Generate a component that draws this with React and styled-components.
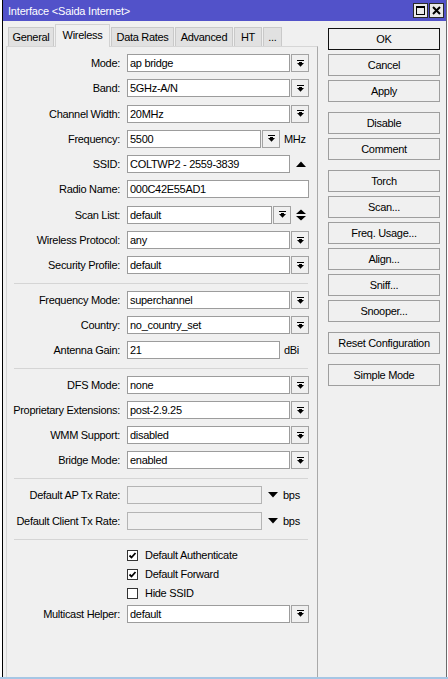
import React from "react";
import styled, { createGlobalStyle } from "styled-components";

const GlobalStyle = createGlobalStyle`
  html, body {
    margin: 0;
    padding: 0;
    background: #ffffff;
  }
  body {
    font-family: "Liberation Sans", Arial, sans-serif;
    font-size: 11px;
    letter-spacing: -0.3px;
    color: #000;
  }
`;

const Page = styled.div`
  width: 448px;
  height: 679px;
  padding-left: 2px;
  box-sizing: border-box;
  display: flex;
  flex-direction: column;
  overflow: hidden;
`;

const Window = styled.div`
  width: 445px;
  height: 677px;
  flex: none;
  box-sizing: border-box;
  border-left: 1px solid #000;
  border-right: 1px solid #6b6b6b;
  background: #f0f0f0;
  display: flex;
  flex-direction: column;
`;

const TaskStrip = styled.div`
  height: 2px;
  margin-left: -2px;
  width: 448px;
  background: #a6c6e4;
`;

const TitleBar = styled.div`
  height: 21px;
  flex: none;
  background: #5252c9;
  color: #fff;
  display: flex;
  align-items: center;
  justify-content: space-between;
  padding: 0 2px 0 5px;
  letter-spacing: -0.2px;
`;

const WinButtons = styled.div`
  display: flex;
  gap: 1px;
`;

const WinBtn = styled.div`
  width: 15px;
  height: 15px;
  box-sizing: border-box;
  border: 1px solid #2a2a2a;
  background: #e9e9e9;
  display: flex;
  align-items: center;
  justify-content: center;
`;

const Body = styled.div`
  flex: 1;
  display: flex;
  min-height: 0;
`;

const LeftCol = styled.div`
  margin-left: 3px;
  width: 312px;
  display: flex;
  flex-direction: column;
`;

const TabStrip = styled.div`
  height: 26px;
  flex: none;
  display: flex;
  align-items: flex-end;
  gap: 1px;
  padding-left: 2px;
  margin-bottom: -1px;
`;

const Tab = styled.div`
  width: ${(p) => p.w}px;
  height: ${(p) => (p.active ? 23 : 19)}px;
  margin-bottom: ${(p) => (p.active ? 0 : 1)}px;
  box-sizing: border-box;
  border: 1px solid ${(p) => (p.active ? "#d2d2d2" : "#c9c9c9")};
  border-bottom: none;
  background: ${(p) => (p.active ? "#f0f0f0" : "#e1e1e1")};
  display: flex;
  align-items: center;
  justify-content: center;
  padding-bottom: ${(p) => (p.active ? 2 : 0)}px;
  position: relative;
  z-index: ${(p) => (p.active ? 2 : 1)};
  white-space: nowrap;
`;

const Panel = styled.div`
  flex: 1;
  border: 1px solid #d6d6d6;
  border-right-color: #a9a9a9;
  border-bottom: none;
  padding-top: 7px;
  display: flex;
  flex-direction: column;
`;

const Section = styled.div`
  display: flex;
  flex-direction: column;
  gap: ${(p) => p.gap}px;
  padding-top: ${(p) => p.pt || 0}px;
`;

const Separator = styled.div`
  height: 1px;
  width: 294px;
  margin: 9px 0 7px 7px;
  background: #d5d5d5;
`;

const Row = styled.div`
  display: flex;
  align-items: center;
  height: 18px;
  margin-top: ${(p) => p.mt || 0}px;
`;

const Label = styled.span`
  width: 113px;
  flex: none;
  margin-right: 7px;
  text-align: right;
  white-space: nowrap;
`;

const Field = styled.div`
  width: ${(p) => p.w}px;
  height: 18px;
  flex: none;
  box-sizing: border-box;
  border: 1px solid ${(p) => (p.disabled ? "#b4b4b4" : "#9c9c9c")};
  background: ${(p) => (p.disabled ? "#f0f0f0" : "#ffffff")};
  padding: 0 2px;
  display: flex;
  align-items: center;
  white-space: nowrap;
  overflow: hidden;
`;

const DropBtn = styled.div`
  width: 18px;
  height: 18px;
  flex: none;
  margin-left: 1px;
  box-sizing: border-box;
  border: 1px solid #a3a3a3;
  background: #f0f0f0;
  display: flex;
  align-items: center;
  justify-content: center;
`;

const Glyph = styled.div`
  margin-left: ${(p) => p.ml}px;
  width: 10px;
  display: flex;
  align-items: center;
  justify-content: center;
`;

const Unit = styled.span`
  margin-left: ${(p) => p.ml}px;
`;

const CheckRow = styled.div`
  display: flex;
  align-items: center;
  height: 13px;
  padding-left: 120px;
`;

const CheckBox = styled.div`
  width: 11px;
  height: 11px;
  box-sizing: border-box;
  border: 1px solid #333;
  background: #fff;
  margin-right: 7px;
  display: flex;
  align-items: center;
  justify-content: center;
`;

const RightCol = styled.div`
  margin-left: 10px;
  width: 112px;
  padding-top: 7px;
  display: flex;
  flex-direction: column;
  gap: 10px;
`;

const BtnGroup = styled.div`
  display: flex;
  flex-direction: column;
  gap: 4px;
`;

const Button = styled.button`
  width: 112px;
  height: 22px;
  box-sizing: border-box;
  border: 1px solid ${(p) => (p.primary ? "#111" : "#9e9e9e")};
  background: #f0f0f0;
  color: #000;
  font: inherit;
  letter-spacing: inherit;
  padding: 0;
`;

const DropIcon = () => (
  <svg width="7" height="7" viewBox="0 0 7 7">
    <rect x="0" y="0" width="7" height="1" fill="#000" />
    <rect x="2" y="2" width="3" height="1" fill="#000" />
    <polygon points="0,3 7,3 3.5,6.8" fill="#000" />
  </svg>
);

const UpIcon = () => (
  <svg width="10" height="6" viewBox="0 0 10 6">
    <polygon points="0,6 10,6 5,0.5" fill="#000" />
  </svg>
);

const UpDownIcon = () => (
  <svg width="10" height="12" viewBox="0 0 10 12">
    <polygon points="0,5 10,5 5,0.5" fill="#000" />
    <polygon points="0,7 10,7 5,11.5" fill="#000" />
  </svg>
);

const DownIcon = () => (
  <svg width="10" height="6" viewBox="0 0 10 6">
    <polygon points="0,0 10,0 5,5.5" fill="#000" />
  </svg>
);

const Tick = () => (
  <svg width="9" height="9" viewBox="0 0 9 9">
    <path d="M1.5 4.5 L3.5 6.5 L7.5 2" stroke="#000" strokeWidth="1.8" fill="none" />
  </svg>
);

const SelectRow = ({ label, value, mt }) => (
  <Row mt={mt}>
    <Label>{label}</Label>
    <Field w={163}>{value}</Field>
    <DropBtn>
      <DropIcon />
    </DropBtn>
  </Row>
);

const Check = ({ checked, children }) => (
  <CheckRow>
    <CheckBox>{checked && <Tick />}</CheckBox>
    {children}
  </CheckRow>
);

const tabs = [
  { name: "General", w: 46 },
  { name: "Wireless", w: 55, active: true },
  { name: "Data Rates", w: 63 },
  { name: "Advanced", w: 58 },
  { name: "HT", w: 28 },
  { name: "...", w: 19 },
];

const buttonGroups = [
  ["OK", "Cancel", "Apply"],
  ["Disable", "Comment"],
  ["Torch", "Scan...", "Freq. Usage...", "Align...", "Sniff...", "Snooper..."],
  ["Reset Configuration"],
  ["Simple Mode"],
];

export default function App() {
  return (
    <>
      <GlobalStyle />
      <Page>
        <Window>
          <TitleBar>
            <span>Interface &lt;Saida Internet&gt;</span>
            <WinButtons>
              <WinBtn>
                <svg width="9" height="9" viewBox="0 0 9 9">
                  <rect x="0.5" y="0.5" width="8" height="8" fill="none" stroke="#000" />
                  <rect x="0" y="0" width="9" height="2" fill="#000" />
                </svg>
              </WinBtn>
              <WinBtn>
                <svg width="9" height="9" viewBox="0 0 9 9">
                  <path d="M1 1 L8 8 M8 1 L1 8" stroke="#000" strokeWidth="2" />
                </svg>
              </WinBtn>
            </WinButtons>
          </TitleBar>
          <Body>
            <LeftCol>
              <TabStrip>
                {tabs.map((t) => (
                  <Tab key={t.name} w={t.w} active={t.active}>
                    {t.name}
                  </Tab>
                ))}
              </TabStrip>
              <Panel>
                <Section gap={7.3}>
                  <SelectRow label="Mode:" value="ap bridge" />
                  <SelectRow label="Band:" value="5GHz-A/N" />
                  <SelectRow label="Channel Width:" value="20MHz" />
                  <Row>
                    <Label>Frequency:</Label>
                    <Field w={134}>5500</Field>
                    <DropBtn>
                      <DropIcon />
                    </DropBtn>
                    <Unit ml={4}>MHz</Unit>
                  </Row>
                  <Row>
                    <Label>SSID:</Label>
                    <Field w={163}>COLTWP2 - 2559-3839</Field>
                    <Glyph ml={6}>
                      <UpIcon />
                    </Glyph>
                  </Row>
                  <Row>
                    <Label>Radio Name:</Label>
                    <Field w={182}>000C42E55AD1</Field>
                  </Row>
                  <Row>
                    <Label>Scan List:</Label>
                    <Field w={145}>default</Field>
                    <DropBtn>
                      <DropIcon />
                    </DropBtn>
                    <Glyph ml={5}>
                      <UpDownIcon />
                    </Glyph>
                  </Row>
                  <SelectRow label="Wireless Protocol:" value="any" />
                  <SelectRow label="Security Profile:" value="default" />
                </Section>
                <Separator />
                <Section gap={7}>
                  <SelectRow label="Frequency Mode:" value="superchannel" />
                  <SelectRow label="Country:" value="no_country_set" />
                  <Row>
                    <Label>Antenna Gain:</Label>
                    <Field w={153}>21</Field>
                    <Unit ml={4}>dBi</Unit>
                  </Row>
                </Section>
                <Separator />
                <Section gap={7}>
                  <SelectRow label="DFS Mode:" value="none" />
                  <SelectRow label="Proprietary Extensions:" value="post-2.9.25" />
                  <SelectRow label="WMM Support:" value="disabled" />
                  <SelectRow label="Bridge Mode:" value="enabled" />
                </Section>
                <Separator />
                <Section gap={7.3}>
                  <Row>
                    <Label>Default AP Tx Rate:</Label>
                    <Field w={135} disabled />
                    <Glyph ml={6}>
                      <DownIcon />
                    </Glyph>
                    <Unit ml={5}>bps</Unit>
                  </Row>
                  <Row>
                    <Label>Default Client Tx Rate:</Label>
                    <Field w={135} disabled />
                    <Glyph ml={6}>
                      <DownIcon />
                    </Glyph>
                    <Unit ml={5}>bps</Unit>
                  </Row>
                </Section>
                <Separator />
                <Section gap={6} pt={2}>
                  <Check checked>Default Authenticate</Check>
                  <Check checked>Default Forward</Check>
                  <Check>Hide SSID</Check>
                  <SelectRow label="Multicast Helper:" value="default" mt={-1} />
                </Section>
              </Panel>
            </LeftCol>
            <RightCol>
              {buttonGroups.map((group, i) => (
                <BtnGroup key={i}>
                  {group.map((b) => (
                    <Button key={b} primary={b === "OK"}>
                      {b}
                    </Button>
                  ))}
                </BtnGroup>
              ))}
            </RightCol>
          </Body>
        </Window>
        <TaskStrip />
      </Page>
    </>
  );
}
